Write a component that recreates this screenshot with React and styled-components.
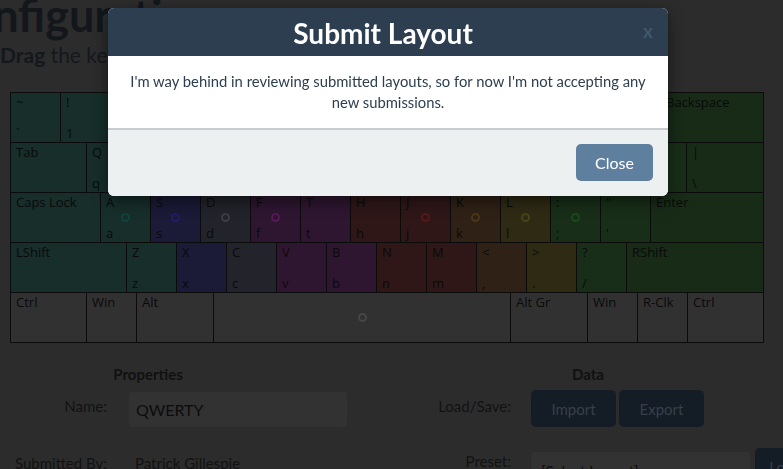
import React from 'react'
import styled, { createGlobalStyle } from 'styled-components'

const GlobalStyle = createGlobalStyle`
  html, body {
    margin: 0;
    padding: 0;
    overflow: hidden;
    background: #2c2c2c;
  }
  body {
    font-family: Lato, 'Open Sans', sans-serif;
    color: #121212;
  }
`

const palette = {
  teal: ['#172e2b', '#0f433e'],
  blue: ['#1b1a37', '#201e64'],
  grey: ['#22232b', '#3b3d47'],
  purple: ['#2e1631', '#571958'],
  red: ['#2f1718', '#55191c'],
  brown: ['#2f2116', '#4b361b'],
  olive: ['#2e2a14', '#4a421b'],
  green: ['#182e18', '#1a4a1a'],
  green2: ['#172b17', '#1a4a1a'],
  mod: ['#313131', '#464646'],
}

// [top, bottom, width, colour, home ring]
const rows = [
  [
    ['~', '`', 50, 'teal'], ['!', '1', 50, 'teal'], ['@', '2', 50, 'blue'],
    ['#', '3', 50, 'grey'], ['$', '4', 50, 'purple'], ['%', '5', 50, 'purple'],
    ['^', '6', 50, 'red'], ['&', '7', 50, 'red'], ['*', '8', 50, 'brown'],
    ['(', '9', 50, 'olive'], [')', '0', 50, 'green'], ['_', '-', 50, 'green'],
    ['+', '=', 50, 'green'], ['Backspace', '', 103, 'green2'],
  ],
  [
    ['Tab', '', 76, 'teal'], ['Q', 'q', 50, 'teal'], ['W', 'w', 50, 'blue'],
    ['E', 'e', 50, 'grey'], ['R', 'r', 50, 'purple'], ['G', 'g', 50, 'purple'],
    ['Y', 'y', 50, 'red'], ['U', 'u', 50, 'red'], ['I', 'i', 50, 'brown'],
    ['O', 'o', 50, 'olive'], ['P', 'p', 50, 'green'], ['{', '[', 50, 'green'],
    ['}', ']', 50, 'green'], ['|', '\\', 77, 'green2'],
  ],
  [
    ['Caps Lock', '', 90, 'teal'], ['A', 'a', 50, 'teal', true], ['S', 's', 50, 'blue', true],
    ['D', 'd', 50, 'grey', true], ['F', 'f', 50, 'purple', true], ['T', 't', 50, 'purple'],
    ['H', 'h', 50, 'red'], ['J', 'j', 50, 'red', true], ['K', 'k', 50, 'brown', true],
    ['L', 'l', 50, 'olive', true], [':', ';', 50, 'green', true], ['"', "'", 50, 'green'],
    ['Enter', '', 113, 'green2'],
  ],
  [
    ['LShift', '', 116, 'teal'], ['Z', 'z', 50, 'teal'], ['X', 'x', 50, 'blue'],
    ['C', 'c', 50, 'grey'], ['V', 'v', 50, 'purple'], ['B', 'b', 50, 'purple'],
    ['N', 'n', 50, 'red'], ['M', 'm', 50, 'red'], ['<', ',', 50, 'brown'],
    ['>', '.', 50, 'olive'], ['?', '/', 50, 'green'], ['RShift', '', 137, 'green2'],
  ],
  [
    ['Ctrl', '', 76, 'mod'], ['Win', '', 50, 'mod'], ['Alt', '', 77, 'mod'],
    ['', '', 297, 'mod', true], ['Alt Gr', '', 77, 'mod'], ['Win', '', 50, 'mod'],
    ['R-Clk', '', 50, 'mod'], ['Ctrl', '', 76, 'mod'],
  ],
]

const Page = styled.div`
  width: 783px;
  height: 469px;
  overflow: hidden;
`

const Title = styled.h1`
  margin: -9px 0 0 -62px;
  font-size: 45px;
  line-height: 48px;
  font-weight: 700;
  white-space: nowrap;
  color: #13171c;
`

const Lead = styled.p`
  margin: 1px 0 0;
  font-size: 21px;
  line-height: 30px;
  color: #14181d;
  white-space: nowrap;

  b {
    font-weight: 700;
  }
`

const Board = styled.div`
  margin: 22px 0 0 10px;
  width: 754px;
  border-top: 1px solid #0b0b0b;
  border-left: 1px solid #0b0b0b;
  box-sizing: border-box;
`

const KeyRow = styled.div`
  display: flex;
`

const Key = styled.div`
  box-sizing: border-box;
  width: ${(p) => p.$w}px;
  height: 50px;
  border-right: 1px solid #0b0b0b;
  border-bottom: 1px solid #0b0b0b;
  background: ${(p) => p.$bg};
  display: flex;
  flex-direction: column;
  padding: 0 5px;
  font-family: 'Open Sans', 'DejaVu Sans', sans-serif;
  font-size: 13px;
  line-height: 18px;
  color: #0a0a0a;
  white-space: nowrap;
`

const KeyLabel = styled.span`
  height: 18px;
`

const KeyMid = styled.div`
  flex: 1;
  display: flex;
  align-items: center;
  justify-content: center;
`

const Ring = styled.span`
  width: 9px;
  height: 9px;
  box-sizing: border-box;
  border-radius: 50%;
  border: 2px solid ${(p) => p.$c};
`

const Bottom = styled.div`
  display: flex;
  margin-top: 21px;
`

const Panel = styled.div`
  width: ${(p) => p.$w}px;
`

const PanelTitle = styled.div`
  width: ${(p) => p.$w}px;
  text-align: center;
  font-size: 15px;
  line-height: 21px;
  font-weight: 700;
  color: #111111;
`

const Form = styled.div`
  display: grid;
  grid-template-columns: ${(p) => p.$label}px auto;
  column-gap: ${(p) => p.$gap}px;
  row-gap: ${(p) => p.$rowGap}px;
  align-items: start;
  justify-content: start;
  margin-top: 5px;
`

const Label = styled.div`
  padding-top: ${(p) => p.$pt || 0}px;
  text-align: right;
  font-size: 15px;
  line-height: 21px;
  color: #121212;
  white-space: nowrap;
`

const Input = styled.div`
  width: 218px;
  height: 35px;
  margin-top: 2px;
  box-sizing: border-box;
  padding: 0 7px;
  border-radius: 4px;
  background: #323232;
  font-size: 16px;
  line-height: 35px;
  color: #0c0c0c;
`

const Static = styled.div`
  padding-left: 6px;
  font-size: 15px;
  line-height: 21px;
  color: #121212;
  white-space: nowrap;
`

const Buttons = styled.div`
  display: flex;
  gap: 3px;
`

const DarkButton = styled.div`
  width: 85px;
  height: 37px;
  border-radius: 5px;
  background: #141c25;
  color: #36404a;
  font-size: 15px;
  display: flex;
  align-items: center;
  justify-content: center;
`

const PresetRow = styled.div`
  display: flex;
  gap: 5px;
  align-items: flex-start;
`

const Select = styled.div`
  width: 219px;
  height: 37px;
  margin-top: 4px;
  box-sizing: border-box;
  padding: 0 10px;
  border-radius: 4px;
  background: #323232;
  color: #0e0e0e;
  font-size: 15px;
  display: flex;
  align-items: center;
  justify-content: space-between;
`

const Caret = styled.span`
  width: 0;
  height: 0;
  margin-right: -6px;
  border-left: 3px solid transparent;
  border-right: 3px solid transparent;
  border-top: 4px solid #0e0e0e;
`

const LoadButton = styled(DarkButton)`
  width: 60px;
`

const Modal = styled.div`
  position: fixed;
  top: 8px;
  left: 108px;
  width: 560px;
  border-radius: 6px;
  overflow: hidden;
  background: #ffffff;
  box-shadow: 0 5px 15px rgba(0, 0, 0, 0.5);
  font-family: Lato, 'Open Sans', sans-serif;
`

const ModalHeader = styled.div`
  height: 48px;
  padding: 0 15px;
  background: #2c3e50;
  display: flex;
  align-items: center;
`

const ModalTitle = styled.div`
  flex: 1;
  text-align: center;
  color: #ffffff;
  font-size: 28px;
  font-weight: 700;
  line-height: 48px;
  margin-top: 1px;
`

const CloseX = styled.span`
  color: #43576b;
  font-size: 19px;
  font-weight: 700;
  line-height: 20px;
  margin-top: -2px;
`

const ModalBody = styled.div`
  padding: 15px 15px;
  text-align: center;
  font-size: 14.8px;
  line-height: 21px;
  color: #2c3e50;
`

const ModalFooter = styled.div`
  border-top: 2px solid #c8ccd0;
  background: #ecf0f1;
  padding: 14px 15px 15px;
  display: flex;
  justify-content: flex-end;
`

const CloseButton = styled.div`
  width: 77px;
  height: 37px;
  border-radius: 5px;
  background: #5f7f9f;
  color: #ffffff;
  font-size: 16px;
  display: flex;
  align-items: center;
  justify-content: center;
`

const App = () => (
  <Page>
    <GlobalStyle />
    <Title>Configuration</Title>
    <Lead>
      <b>Drag</b> the keys to rearrange the layout.
    </Lead>
    <Board>
      {rows.map((row, i) => (
        <KeyRow key={i}>
          {row.map(([top, bottom, w, colour, ring], j) => (
            <Key key={j} $w={w} $bg={palette[colour][0]}>
              <KeyLabel>{top}</KeyLabel>
              <KeyMid>{ring && <Ring $c={palette[colour][1]} />}</KeyMid>
              <KeyLabel>{bottom}</KeyLabel>
            </Key>
          ))}
        </KeyRow>
      ))}
    </Board>
    <Bottom>
      <Panel $w={400}>
        <PanelTitle $w={296}>Properties</PanelTitle>
        <Form $label={107} $gap={22} $rowGap={26}>
          <Label $pt={6}>Name:</Label>
          <Input>QWERTY</Input>
          <Label>Submitted By:</Label>
          <Static>Patrick Gillespie</Static>
        </Form>
      </Panel>
      <Panel $w={383}>
        <PanelTitle $w={376}>Data</PanelTitle>
        <Form $label={111} $gap={20} $rowGap={21}>
          <Label $pt={6}>Load/Save:</Label>
          <Buttons>
            <DarkButton>Import</DarkButton>
            <DarkButton>Export</DarkButton>
          </Buttons>
          <Label $pt={3}>Preset:</Label>
          <PresetRow>
            <Select>
              [Select Layout]
              <Caret />
            </Select>
            <LoadButton>Load</LoadButton>
          </PresetRow>
        </Form>
      </Panel>
    </Bottom>
    <Modal>
      <ModalHeader>
        <ModalTitle>Submit Layout</ModalTitle>
        <CloseX>x</CloseX>
      </ModalHeader>
      <ModalBody>
        I'm way behind in reviewing submitted layouts, so for now I'm not accepting any new
        submissions.
      </ModalBody>
      <ModalFooter>
        <CloseButton>Close</CloseButton>
      </ModalFooter>
    </Modal>
  </Page>
)

export default App
